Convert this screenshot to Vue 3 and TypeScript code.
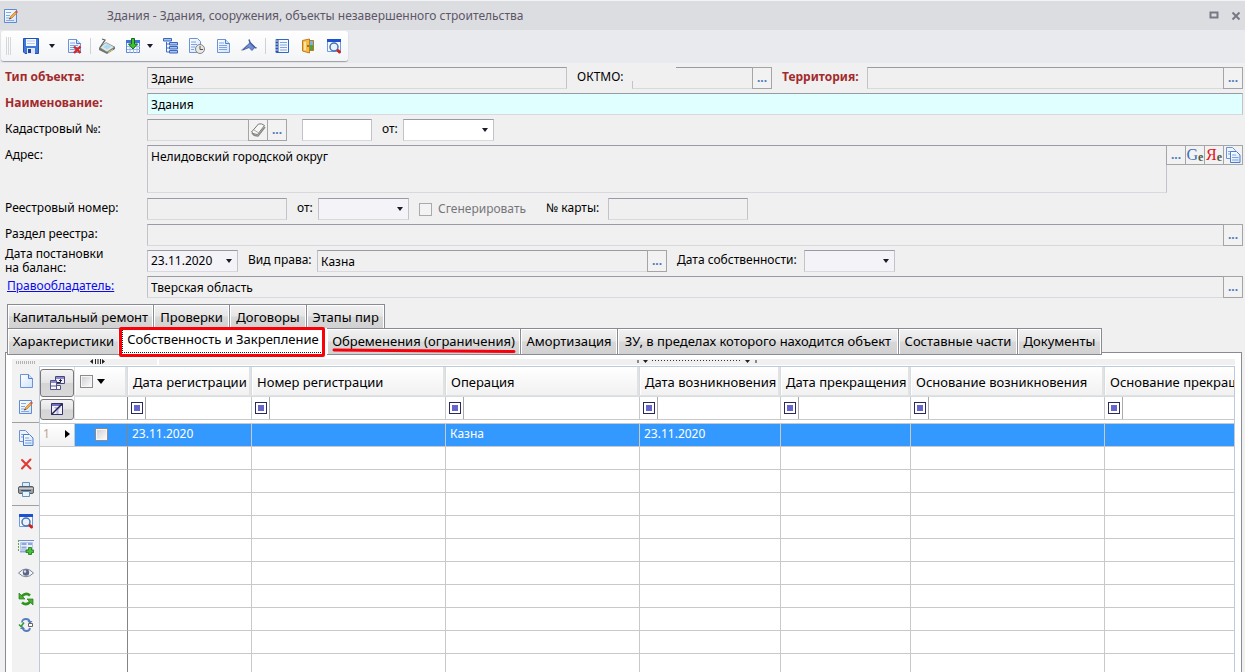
<script setup lang="ts">
import { ref } from 'vue'

interface Tab { title: string; marked?: boolean }

const upperTabs: Tab[] = [
  { title: 'Капитальный ремонт' },
  { title: 'Проверки' },
  { title: 'Договоры' },
  { title: 'Этапы пир' },
]
const lowerTabs: Tab[] = [
  { title: 'Характеристики' },
  { title: 'Собственность и Закрепление' },
  { title: 'Обременения (ограничения)', marked: true },
  { title: 'Амортизация' },
  { title: 'ЗУ, в пределах которого находится объект' },
  { title: 'Составные части' },
  { title: 'Документы' },
]
const activeTab = ref('Собственность и Закрепление')

const columns: string[] = [
  'Дата регистрации',
  'Номер регистрации',
  'Операция',
  'Дата возникновения',
  'Дата прекращения',
  'Основание возникновения',
  'Основание прекращения',
]
const record: string[] = ['23.11.2020', '', 'Казна', '23.11.2020', '', '', '']
const emptyRows = 10

interface Tool { icon: string; label: string }
const gridTools: Tool[][] = [
  [{ icon: 'new', label: 'Создать' }, { icon: 'edit', label: 'Изменить' }],
  [{ icon: 'copy', label: 'Копировать' }, { icon: 'cross', label: 'Удалить' }, { icon: 'print', label: 'Печать' }],
  [
    { icon: 'find', label: 'Поиск' },
    { icon: 'addrow', label: 'Добавить строку' },
    { icon: 'eye', label: 'Просмотр' },
    { icon: 'refresh', label: 'Обновить' },
    { icon: 'sync', label: 'Синхронизация' },
  ],
]
const mainTools: Tool[][] = [
  [{ icon: 'save', label: 'Сохранить' }, { icon: 'caret', label: 'Варианты сохранения' }, { icon: 'docdel', label: 'Удалить документ' }],
  [
    { icon: 'scanner', label: 'Сканировать' },
    { icon: 'import', label: 'Загрузить' },
    { icon: 'caret', label: 'Варианты загрузки' },
    { icon: 'tree', label: 'Дерево' },
    { icon: 'history', label: 'История' },
    { icon: 'doc', label: 'Документ' },
    { icon: 'pin', label: 'Закрепить' },
  ],
  [{ icon: 'notebook', label: 'Журнал' }, { icon: 'door', label: 'Выход' }, { icon: 'find', label: 'Поиск' }],
]
</script>

<template>
  <div class="window">
    <svg class="sprites" aria-hidden="true">
      <linearGradient id="paper" x1="0" y1="0" x2="1" y2="1">
        <stop offset="0" stop-color="#fff" /><stop offset="1" stop-color="#cfe3fb" />
      </linearGradient>
      <symbol id="caret" viewBox="0 0 16 16"><path d="M5 6h6L8 10z" fill="#1c1a2c" /></symbol>
      <symbol id="save" viewBox="0 0 16 16">
        <path d="M.5.5h15v15H2L.5 14z" fill="#4177d8" stroke="#2451b5" />
        <path d="M3 1h10v7H3z" fill="#f4f8ff" /><path d="M4 3h8M4 5.500h8" stroke="#b5c9ec" />
        <path d="M4 10h8v6H4z" fill="#dfe8f8" /><path d="M5 11h3v4H5z" fill="#21418f" />
      </symbol>
      <symbol id="new" viewBox="0 0 16 16">
        <path d="M2.500 1.500h8l4 4v9h-12z" fill="url(#paper)" stroke="#6c93d6" /><path d="M10.500 1.500v4h4" fill="#d2e3fa" stroke="#4f7dcc" />
      </symbol>
      <symbol id="doc" viewBox="0 0 16 16">
        <use href="#new" /><path d="M4 5h5M4 7.500h8M4 9.500h8M4 11.500h8" stroke="#7ea2e4" />
      </symbol>
      <symbol id="docdel" viewBox="0 0 16 16">
        <use href="#doc" /><path d="M8 8.500l6.500 6.500M14.500 8.500L8 15" stroke="#d42828" stroke-width="2.400" />
      </symbol>
      <symbol id="edit" viewBox="0 0 16 16">
        <path d="M1.500 1.500h12v13h-12z" fill="url(#paper)" stroke="#5d8bd6" /><path d="M3 4.500h5M3 7.500h4M3 10h3M3 12.500h8" stroke="#86a9e4" />
        <path d="M6.500 11l1-2.500 5-5 1.500 1.500-5 5z" fill="#f7ad45" stroke="#a86a24" stroke-width=".6" /><path d="M6 11.500l1-2 1 1z" fill="#333" />
        <path d="M12 4l1.500-1.500 1.500 1.500-1.500 1.500z" fill="#cf5545" />
      </symbol>
      <symbol id="copy" viewBox="0 0 16 16">
        <path d="M1.500.500h6l3 3v8h-9z" fill="#edf4ff" stroke="#6c93d6" /><path d="M3 4.500h3M3 7h3" stroke="#7ea2e4" />
        <path d="M5.500 4.500h6l3.500 3.500v7.500H5.500z" fill="url(#paper)" stroke="#4f7dcc" /><path d="M7 8h4M7 10.500h6.500M7 13h6.500" stroke="#7ea2e4" />
      </symbol>
      <symbol id="scanner" viewBox="0 0 16 16">
        <path d="M0 10l7-5 9 4v2l-8 5-8-4z" fill="#6f7472" /><path d="M.5 9.500l6.500-5 8.500 4.500-7.500 5z" fill="#e4e8e4" stroke="#7f8583" stroke-width=".7" />
        <path d="M4 9l4-3 4.500 2.500L8 11.500z" fill="#a8dcf4" /><path d="M1 9.500L6 2l-3-1" stroke="#5e6462" fill="none" stroke-width="1.300" /><path d="M9 14.500l5-3" stroke="#d8cf72" />
      </symbol>
      <symbol id="import" viewBox="0 0 16 16">
        <path d="M1.500 2.500h13v12h-13z" fill="#f7faff" stroke="#5f87d4" /><path d="M1 2h14v3H1z" fill="#3f74dc" />
        <path d="M2 8.500h13M2 11.500h13M5 5v10M8.500 5v10M12 5v10" stroke="#9db8ea" />
        <path d="M6.500.500h3v5.500h3L8 11 3.500 6h3z" fill="#3fc42f" stroke="#126c13" />
      </symbol>
      <symbol id="tree" viewBox="0 0 16 16">
        <path d="M3.500 4v10M3.500 6h4M3.500 10h4M3.500 14h4" stroke="#3f6dc4" fill="none" />
        <path d="M.5.500h8v2.500h-8zM6.500 4.500h8v2.500h-8zM6.500 8.500h8v2.500h-8zM6.500 12.500h8v2.500h-8z" fill="#a9c4f4" stroke="#3a66bc" />
      </symbol>
      <symbol id="history" viewBox="0 0 16 16">
        <path d="M.5.500h8l3 3v11H.500z" fill="url(#paper)" stroke="#6c93d6" /><path d="M2 4h5M2 6.500h6M2 9h4M2 11.500h3" stroke="#7ea2e4" />
        <circle cx="11" cy="11" r="4.500" fill="#e7e7e5" stroke="#84847f" /><path d="M11 8v3.500h3" stroke="#555" fill="none" />
      </symbol>
      <symbol id="pin" viewBox="0 0 16 16">
        <path d="M.5 12.500l6-5" stroke="#8b93a5" stroke-width="1.300" /><path d="M2 12l7-7.500 5 4.500-3 3.500-3-3z" fill="#6f8fd4" stroke="#37549f" stroke-width=".8" />
        <path d="M8 1.500l1 3 5 5 1.500.500" stroke="#4a60a0" stroke-width="1.500" fill="none" />
      </symbol>
      <symbol id="notebook" viewBox="0 0 16 16">
        <path d="M2.500 1.500h12v13h-12z" fill="#f4f8ff" stroke="#3366c5" /><path d="M3 1.500v13" stroke="#2451a9" stroke-width="3" />
        <path d="M6 4.500h7M6 7h7M6 9.500h7M6 12h7" stroke="#80a4e2" /><path d="M1 3h3M1 6h3M1 9h3M1 12h3" stroke="#d6dfef" />
      </symbol>
      <symbol id="door" viewBox="0 0 16 16">
        <path d="M7.500 2.500h6v10h-6z" fill="#4ca53c" stroke="#b97a23" /><path d="M9 3h4v4H9z" fill="#6db7f0" />
        <path d="M2.500 2.500l7-1.500v14l-7-2z" fill="#f5bb48" stroke="#bd7c20" /><path d="M4 4l2-.500v9L4 12z" fill="#fde2a0" /><circle cx="8" cy="8" r="1" fill="#8b5717" />
      </symbol>
      <symbol id="find" viewBox="0 0 16 16">
        <path d="M1.500 1.500h13v12h-13z" fill="#f5f8ff" stroke="#6f9be4" /><path d="M1 1h14v3H1z" fill="#1e50cf" />
        <circle cx="8" cy="9" r="4" fill="#e8f3ff" stroke="#4973a8" stroke-width="1.500" /><path d="M12 12.500l1.500 1.500" stroke="#c92323" stroke-width="3" stroke-linecap="round" />
      </symbol>
      <symbol id="cross" viewBox="0 0 16 16"><path d="M4 4l8.500 8.500M12.500 3.500L4 12.500" stroke="#e03a36" stroke-width="2" stroke-linecap="round" /></symbol>
      <symbol id="print" viewBox="0 0 16 16">
        <path d="M4.500.500h7v5h-7z" fill="#dceeff" stroke="#6593bc" /><rect x=".5" y="4.500" width="15" height="7" rx="1.500" fill="#9a9ea3" stroke="#575d64" />
        <path d="M1 6.500h14" stroke="#c9cdd0" /><path d="M3 8.500h10" stroke="#4a4f55" /><path d="M4.500 9.500h7v5h-7z" fill="#e8f4ff" stroke="#6593bc" />
      </symbol>
      <symbol id="addrow" viewBox="0 0 16 16">
        <path d="M.5 1v12" stroke="#60a850" stroke-dasharray="2 1" /><path d="M1 1.500h15" stroke="#6f8fd4" /><path d="M2.500 3.500h12v7h-12z" fill="#eaf0fd" stroke="#b7c7e8" />
        <path d="M3.500 5h5M10 5h4M3.500 8.500h5M2 12.500h6" stroke="#8fa6dc" stroke-width="2" /><path d="M10.500 8.500h3v2.500h2.200v2.500h-2.200v2h-3v-2H8V11h2.500z" fill="#4cc03c" stroke="#177717" stroke-width=".8" />
      </symbol>
      <symbol id="eye" viewBox="0 0 16 16">
        <path d="M.5 8Q8 0 15.500 8 8 15.500.500 8z" fill="#f6f7fa" stroke="#7d849b" /><circle cx="8" cy="7.500" r="3.200" fill="#5c6788" /><circle cx="7" cy="6.500" r="1.200" fill="#dfe4f0" />
      </symbol>
      <symbol id="refresh" viewBox="0 0 16 16">
        <path d="M4 5Q8 1 12 4.500" stroke="#31921f" stroke-width="2.600" fill="none" /><path d="M1 2v6h6z" fill="#45b02d" stroke="#227c18" stroke-width=".7" />
        <path d="M12 11Q8 15 4 11.500" stroke="#31921f" stroke-width="2.600" fill="none" /><path d="M15 14V8H9z" fill="#45b02d" stroke="#227c18" stroke-width=".7" />
      </symbol>
      <symbol id="sync" viewBox="0 0 16 16">
        <path d="M4 5.500Q4 2 8 2q3 0 3.500 2.500M4.500 11q1 3 4 3 3 0 3.500-3" stroke="#557cc0" stroke-width="1.800" fill="none" /><path d="M9.500 4h5L12 7zM7 12H2l2.500-3z" fill="#557cc0" />
        <path d="M1 7.500l2 2 3-4" stroke="#2e9e2e" stroke-width="1.500" fill="none" /><path d="M10.500 6.500h4v3h-4z" fill="#fff" stroke="#666" />
      </symbol>
      <symbol id="eraser" viewBox="0 0 16 16">
        <path d="M1.500 10l7-8q3-1 6 1.500l-7 9q-4 0-6-2.500z" fill="#f7f7f5" stroke="#777" /><path d="M2 11q2 3 6 3l7-9" stroke="#8a8a86" stroke-width="1.500" fill="none" /><path d="M4 8l5 3" stroke="#aaa" />
      </symbol>
      <symbol id="groups" viewBox="0 0 16 16">
        <path d="M6.500 1.500h9v7h-9z" fill="#f1f1fb" stroke="#45457c" /><path d="M7 2h8v2H7z" fill="#8b89cc" />
        <path d="M1.500 5.500h6v9h-6zM7.500 10.500h4v4h-4z" fill="#f6f6fc" stroke="#55558c" /><path d="M2 6h5v2H2z" fill="#8b89cc" /><path d="M2 11h5" stroke="#55558c" />
        <path d="M8 7.500h3.500V4.500M10 6l1.500-1.500L13 6" stroke="#1f1f45" fill="none" />
      </symbol>
      <symbol id="filteroff" viewBox="0 0 16 16">
        <path d="M2.500 2.500h11v11h-11z" fill="#f1f1fb" stroke="#33336a" /><path d="M3 3h10v2H3z" fill="#7370bd" /><path d="M5 6h7l-2.500 3v4h-2V9z" fill="#b4b3e4" />
        <path d="M2.500 13.500l11-11" stroke="#22224d" stroke-width="1.500" />
      </symbol>
    </svg>

    <header class="titlebar">
      <svg class="icon"><use href="#edit" /></svg>
      <h1>Здания - Здания, сооружения, объекты незавершенного строительства</h1>
      <button type="button" class="winbtn" aria-label="Развернуть"><svg viewBox="0 0 10 10"><path d="M1.500 1.500h7v5h-7z" fill="none" stroke="#777884" stroke-width="2" /></svg></button>
      <button type="button" class="winbtn" aria-label="Закрыть"><svg viewBox="0 0 10 10"><path d="M1.500 1.500l7 7M8.500 1.500l-7 7" stroke="#777884" stroke-width="2" /></svg></button>
    </header>

    <div class="toolzone">
      <div class="toolbar" role="toolbar">
        <span class="grip"></span>
        <template v-for="(group, g) in mainTools" :key="g">
          <span v-if="g" class="sep"></span>
          <button v-for="t in group" :key="t.label" type="button" :class="{ narrow: t.icon === 'caret', joined: t.label === 'Варианты загрузки' }" :aria-label="t.label">
            <svg class="icon"><use :href="'#' + t.icon" /></svg>
          </button>
        </template>
      </div>
    </div>

    <form class="form" @submit.prevent>
      <div class="row row-type">
        <label for="type" class="required">Тип объекта:</label>
        <input id="type" value="Здание" readonly />
        <label for="oktmo" class="inner">ОКТМО:</label>
        <div class="field erased"><input id="oktmo" readonly /><button type="button" class="pick" aria-label="Выбрать ОКТМО">...</button></div>
        <label for="territory" class="inner required">Территория:</label>
        <div class="field"><input id="territory" readonly /><button type="button" class="pick" aria-label="Выбрать территорию">...</button></div>
      </div>
      <div class="row row-wide">
        <label for="name" class="required">Наименование:</label>
        <input id="name" class="accent" value="Здания" />
      </div>
      <div class="row row-cadastre">
        <label for="cadastre">Кадастровый №:</label>
        <div class="field">
          <input id="cadastre" readonly />
          <button type="button" class="pick" aria-label="Очистить"><svg class="icon"><use href="#eraser" /></svg></button>
          <button type="button" class="pick" aria-label="Выбрать номер">...</button>
        </div>
        <input class="white gap-left" aria-label="Дополнительный номер" />
        <label for="cadDate" class="inner">от:</label>
        <div class="combo"><select id="cadDate" class="white"><option></option></select><svg class="icon"><use href="#caret" /></svg></div>
      </div>
      <div class="row row-address">
        <label for="address">Адрес:</label>
        <div class="field">
          <textarea id="address" readonly>Нелидовский городской округ</textarea>
          <button type="button" class="pick" aria-label="Выбрать адрес">...</button>
          <button type="button" class="pick map google" aria-label="Карта Google">G<i>e</i></button>
          <button type="button" class="pick map yandex" aria-label="Карта Яндекс">Я<i>e</i></button>
          <button type="button" class="pick" aria-label="Копировать адрес"><svg class="icon"><use href="#copy" /></svg></button>
        </div>
      </div>
      <div class="row row-registry">
        <label for="regNumber">Реестровый номер:</label>
        <input id="regNumber" readonly />
        <label for="regDate" class="inner">от:</label>
        <div class="combo"><select id="regDate"><option></option></select><svg class="icon"><use href="#caret" /></svg></div>
        <label class="check"><input type="checkbox" disabled />Сгенерировать</label>
        <label for="card" class="inner">№ карты:</label>
        <input id="card" readonly />
      </div>
      <div class="row row-wide">
        <label for="section">Раздел реестра:</label>
        <div class="field"><input id="section" readonly /><button type="button" class="pick" aria-label="Выбрать раздел">...</button></div>
      </div>
      <div class="row row-balance">
        <label for="balanceDate" class="double">Дата постановки<br />на баланс:</label>
        <div class="combo"><select id="balanceDate"><option>23.11.2020</option></select><svg class="icon"><use href="#caret" /></svg></div>
        <label for="right" class="inner">Вид права:</label>
        <div class="field"><input id="right" value="Казна" readonly /><button type="button" class="pick" aria-label="Выбрать вид права">...</button></div>
        <label for="ownDate" class="inner">Дата собственности:</label>
        <div class="combo"><select id="ownDate"><option></option></select><svg class="icon"><use href="#caret" /></svg></div>
      </div>
      <div class="row row-wide">
        <span class="linkcell"><a href="#owner">Правообладатель:</a></span>
        <div class="field"><input value="Тверская область" aria-label="Правообладатель" readonly /><button type="button" class="pick" aria-label="Выбрать правообладателя">...</button></div>
      </div>
    </form>

    <nav class="tabs">
      <div class="tabrow upper">
        <button v-for="t in upperTabs" :key="t.title" type="button" @click="activeTab = t.title">{{ t.title }}</button>
      </div>
      <div class="tabrow lower">
        <button v-for="t in lowerTabs" :key="t.title" type="button" :class="{ active: activeTab === t.title, marked: t.marked }" @click="activeTab = t.title">
          {{ t.title }}
          <svg v-if="t.marked" class="stroke" viewBox="0 0 184 5" preserveAspectRatio="none"><path d="M2 2L182 3.500" stroke="#f8000c" stroke-width="3" stroke-linecap="round" /></svg>
        </button>
      </div>
    </nav>

    <main class="panel">
      <div class="sidebar" role="toolbar">
        <span class="dots"></span>
        <template v-for="(group, g) in gridTools" :key="g">
          <span v-if="g" class="rule"></span>
          <button v-for="t in group" :key="t.icon" type="button" :aria-label="t.label"><svg class="icon"><use :href="'#' + t.icon" /></svg></button>
        </template>
      </div>
      <div class="content">
        <div class="splitter">
          <svg class="left" viewBox="0 0 120 6"><path d="M54 0v5L51 2.500zM63 0v5l3-2.500z" fill="#222" /><path d="M56.500 0v5M59 0v5M61.500 0v5" stroke="#222" /><path d="M119 0v6" stroke="#fff" stroke-width="2" /></svg>
          <svg class="middle" viewBox="0 0 120 6"><path d="M1 1v3M119 1v3" stroke="#222" /><path d="M6 1h5L8.500 4zM108 1h5l-2.500 3z" fill="#222" /><path d="M15 1.500h90" stroke="#333" stroke-dasharray="1 2" /></svg>
        </div>
        <div class="gridbox">
          <table>
            <colgroup>
              <col class="c-sel" /><col class="c-check" /><col class="c-regdate" /><col class="c-long" /><col class="c-long" />
              <col class="c-start" /><col class="c-end" /><col class="c-long" /><col class="c-long" />
            </colgroup>
            <thead>
              <tr class="head">
                <td class="corner"><button type="button" aria-label="Группировка"><svg class="icon"><use href="#groups" /></svg></button></td>
                <th class="checkhead"><span><input type="checkbox" aria-label="Отметить все" /><svg class="icon"><path d="M4 5h8l-4 5z" fill="#000" /></svg></span></th>
                <th v-for="c in columns" :key="c" scope="col">{{ c }}</th>
              </tr>
              <tr class="filter">
                <td class="corner"><button type="button" aria-label="Сбросить фильтр"><svg class="icon"><use href="#filteroff" /></svg></button></td>
                <td class="edge"></td>
                <td v-for="c in columns" :key="c"><button type="button" class="op" :aria-label="'Фильтр: ' + c"><i></i></button></td>
              </tr>
              <tr class="spacer"><td :colspan="columns.length + 2"></td></tr>
            </thead>
            <tbody>
              <tr class="selected">
                <td class="rownum"><span>1<svg viewBox="0 0 5 8"><path d="M0 0l5 4-5 4z" fill="#000" /></svg></span></td>
                <td class="edge"><input type="checkbox" aria-label="Отметить строку" /></td>
                <td v-for="(v, i) in record" :key="i">{{ v }}</td>
              </tr>
              <tr v-for="n in emptyRows" :key="n">
                <td class="plain"></td><td class="edge"></td><td v-for="c in columns" :key="c"></td>
              </tr>
            </tbody>
          </table>
        </div>
      </div>
    </main>
  </div>
</template>

<style>
body { margin: 0; background: #f0f0f0; }
</style>

<style scoped>
.window {
  display: flex; flex-direction: column; height: 100vh; overflow: hidden;
  background: #f0f0f0; color: #000; font: 12px/20px "Noto Sans", "Open Sans", sans-serif;
}
.window * { box-sizing: border-box; }
.sprites { position: absolute; width: 0; height: 0; }
button, input, select, textarea { font: inherit; color: inherit; margin: 0; border-radius: 0; outline: none; }
button { border: 0; padding: 0; background: none; }
.icon { width: 16px; height: 16px; display: block; flex: none; }

.titlebar { display: flex; align-items: center; height: 30px; padding: 0 4px 0 3px; background: #dcdde0; border-top: 1px solid #f2f3f5; flex: none; }
.titlebar h1 { flex: 1; margin: 0 0 0 88px; font-size: 12px; font-weight: 400; color: #5c5668; white-space: nowrap; }
.winbtn { width: 10px; height: 14px; margin-left: 12px; }
.winbtn svg { display: block; width: 10px; height: 10px; }

.toolzone { background: #e9eaee; padding: 1px; height: 33px; flex: none; }
.toolbar {
  display: inline-flex; align-items: center; gap: 4px; height: 30px; padding: 0 3px 0 5px;
  background: linear-gradient(#fff, #f3f4f6); border-radius: 3px; box-shadow: 0 1px 1px #9c9da6;
}
.toolbar button { width: 22px; display: flex; justify-content: center; }
.toolbar .narrow { width: 12px; margin-right: 1px; }
.toolbar .joined { margin-left: -4px; margin-right: 0; }
.toolbar .narrow .icon { margin: 0 -2px; }
.grip { width: 6px; height: 18px; margin-right: 4px; background: repeating-linear-gradient(90deg, #d6d7db 0 1px, transparent 1px 2px); }
.sep { width: 1px; height: 16px; margin: 0 1px; background: #d0d1d6; }

.form { display: flex; flex-direction: column; gap: 4px; padding: 4px 2px 6px 5px; flex: none; }
.row { display: grid; height: 22px; align-items: start; grid-template-rows: 22px; }
.row > label, .linkcell { white-space: nowrap; }
.row-wide, .row-address { grid-template-columns: 142px minmax(0, 1fr); }
.row-type { grid-template-columns: 142px minmax(0, 420fr) 65px 140px 95px minmax(0, 376fr); }
.row-cadastre { grid-template-columns: 142px 140px 85px 31px 91px; }
.row-registry { grid-template-columns: 142px 140px 31px 91px 127px 72px 140px; }
.row-balance { grid-template-columns: 142px 91px 79px 350px 137px 91px; }
.row-address { height: 49px; grid-template-rows: 49px; }
.inner { padding-left: 10px; }
.required { font-weight: 700; color: #a32a2c; }
.double { line-height: 14px; align-self: center; }
.linkcell { padding-left: 2px; }
.linkcell a { color: #0a0af0; text-decoration: underline; }

.form input, .form select, .form textarea {
  display: block; width: 100%; min-width: 0; height: 22px; padding: 0 3px; background: #f0f0f0;
  border: 1px solid #c2c2ca; border-top-color: #9a9aa6; border-bottom-color: #d8d8de;
}
.form textarea { height: 48px; padding-top: 1px; resize: none; overflow: hidden; }
.form input.accent { background: #e0ffff; }
.form .white { background: #fff; }
.form .gap-left { width: 70px; margin-left: 15px; }
.field { display: flex; align-items: flex-start; position: relative; }
.field input, .field textarea { flex: 1; width: auto; }
.field .pick {
  flex: none; width: 20px; height: 22px; margin-left: -1px; display: flex; align-items: center; justify-content: center;
  border: 1px solid #a5a5a8; background: #f2f2f2; color: #4b78ba; font-weight: 700;
}
.row-address .field .pick { height: 20px; }
.erased::before { content: ""; position: absolute; left: -6px; top: -2px; width: 50px; height: 16px; background: #f0f0f0; }
.field .map { font: 16px/18px "Liberation Serif", serif; }
.map i { font: 700 12px/14px "Liberation Serif", serif; color: #4b5b40; align-self: end; }
.field .google { color: #3d70b8; }
.field .yandex { color: #e3141c; }
.combo { position: relative; }
.form select { appearance: none; background: #f4f4f8; }
.form select.white { background: #fff; }
.combo .icon { position: absolute; right: 1px; top: 3px; pointer-events: none; }
.check { display: flex; align-items: center; gap: 6px; height: 22px; padding-left: 10px; color: #76767a; }
.form .check input, .gridbox input {
  appearance: none; flex: none; width: 13px; height: 13px; padding: 0; border: 1px solid #aaaaad; background: #f3f3f3;
}

.tabs { position: relative; z-index: 1; margin-bottom: -1px; padding: 0 7px; flex: none; font-size: 13px; }
.tabrow { display: grid; height: 24px; }
.upper { grid-template-columns: 147px 76px 77px 78px; }
.lower { grid-template-columns: 113px 207px 194px 97px 281px 119px 84px; height: 25px; }
.tabrow button {
  position: relative; display: flex; align-items: center; justify-content: center; white-space: nowrap;
  border: 1px solid #8a8a95; border-left-width: 0; box-shadow: inset 1px 1px #fff, inset -1px 0 #fff;
  background: linear-gradient(#f1f1f1, #e6e6e6 48%, #d8d8d8 52%, #d1d1d1);
}
.tabrow button:first-child { border-left-width: 1px; }
.upper button { border-bottom: 0; }
.lower button { padding-bottom: 2px; }
.tabrow .active { background: #fff; border-color: #fff; padding-bottom: 5px; box-shadow: none; }
.active::before { content: ""; position: absolute; inset: 1px 5px 1px 2px; border: 1px dotted #222; border-width: 0 0 1px 1px; }
.active::after { content: ""; position: absolute; inset: -2px 1px -3px -1px; border: 3px solid #fb0007; border-radius: 2px; }
.stroke { position: absolute; left: 5px; bottom: 1px; width: 184px; height: 5px; }

.panel { display: flex; flex: 1; min-height: 0; margin: 0 3px 0 5px; padding: 6px 6px 0 6px; background: #fff; border: 1px solid #8a8a95; border-bottom: 0; }
.sidebar { display: flex; flex-direction: column; width: 27px; flex: none; background: #f2f2f2; }
.sidebar button { height: 26px; display: flex; align-items: center; justify-content: center; }
.dots { height: 3px; margin: 2px 4px 4px; background: repeating-linear-gradient(90deg, #b3b3b3 0 1px, transparent 1px 2px); }
.rule { height: 1px; margin: 2px 0; background: #a0a0a0; }
.content { display: flex; flex-direction: column; flex: 1; min-width: 0; }
.splitter { position: relative; height: 6px; margin-bottom: 1px; background: #f0f0f0; flex: none; }
.splitter svg { position: absolute; top: 0; width: 120px; height: 6px; }
.splitter .middle { left: 50%; }
.gridbox { flex: 1; min-height: 0; overflow: hidden; border: 1px solid #bccbda; border-bottom: 0; }
table { table-layout: fixed; width: 1259px; border-collapse: separate; border-spacing: 0; }
.c-sel { width: 35px; } .c-check { width: 53px; } .c-regdate { width: 124px; } .c-long { width: 194px; } .c-start { width: 141px; } .c-end { width: 130px; }
td, th { padding: 0 4px; border-right: 1px solid #c9c9c9; border-bottom: 1px solid #c9c9c9; text-align: left; white-space: nowrap; overflow: hidden; }
.head td, .head th { height: 30px; }
th {
  padding: 0 5px; font-size: 13px; font-weight: 400; background: linear-gradient(#fff, #f1f1f1);
  border-color: #d5dde0; box-shadow: inset -2px -1px #e2e2e2, inset 1px 0 #fff;
}
.checkhead span { display: flex; align-items: center; }
.filter td { height: 22px; padding: 0 3px; }
.filter td.corner, .head td.corner { padding: 1px 0 0; border-right-color: #ddd; border-bottom: 0; }
.corner button { display: flex; align-items: center; justify-content: center; width: 34px; height: 28px; border: 1px solid #77777c; border-radius: 3px; background: linear-gradient(#f4f4f4, #e4e4e4 48%, #d4d4d4 52%, #d9d9d9); }
.filter .corner button { height: 21px; }
.spacer td { height: 4px; padding: 0; border-right: 0; }
.op { position: relative; display: flex; align-items: center; width: 12px; height: 22px; }
.op::after { content: ""; position: absolute; left: 14px; top: 0; width: 1px; height: 22px; background: #aaa; }
.filter td { overflow: visible; }
.op i { width: 12px; height: 12px; border: 1px solid #29295c; background: #6666cc; box-shadow: inset 0 0 0 2px #fff; }
tbody td { height: 23px; }
td.edge { border-right-color: #858585; text-align: center; }
td.plain { border-right: 0; }
.selected td { background: #3399ff; color: #fff; padding-bottom: 2px; line-height: 18px; }
.selected td.rownum { background: linear-gradient(#fff, #f1f1f1); color: #b8a58e; padding-left: 3px; }
.rownum svg { width: 5px; height: 8px; }
.rownum span { display: flex; align-items: center; justify-content: space-between; }
.gridbox input { display: inline-block; vertical-align: middle; border-color: #8b8b8b; background: linear-gradient(135deg, #cdcdd2, #fff); box-shadow: inset 0 0 0 1px #f6f6f6; }
</style>
